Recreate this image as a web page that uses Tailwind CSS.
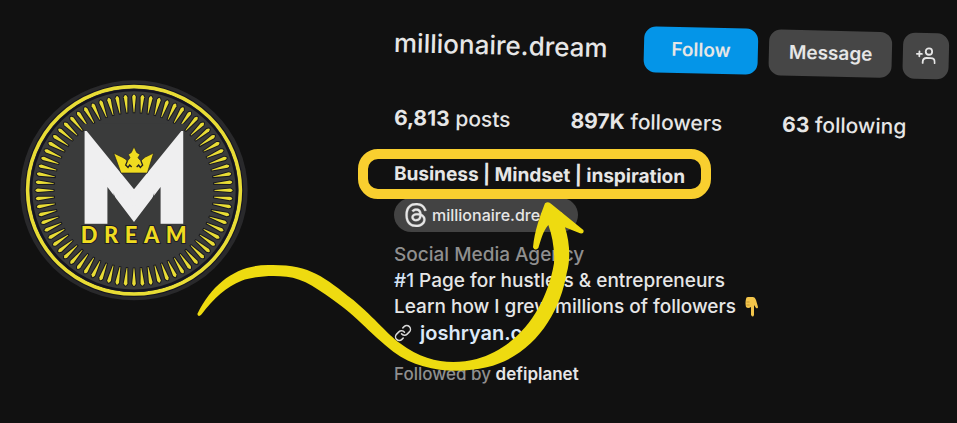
<!DOCTYPE html>
<html lang="en">
<head>
  <meta charset="UTF-8" />
  <meta name="viewport" content="width=device-width, initial-scale=1.0"/>
  <title>millionaire.dream</title>
  <script src="https://cdn.jsdelivr.net/npm/@tailwindcss/browser@4"></script>
</head>
<body class="min-h-screen overflow-x-hidden bg-[#111111] text-[#e6e6e6] font-['Inter',sans-serif]">
  <main class="relative flex items-start pl-5 pr-2 pt-5">
    <!-- Avatar -->
    <svg class="mt-15 w-[228px] shrink-0" viewBox="27 28 686 664" role="img" aria-label="M Dream logo">
      <ellipse cx="370" cy="360" rx="342" ry="331" fill="#29292b"/>
      <ellipse cx="370" cy="360" rx="329" ry="321" fill="#151520"/>
      <ellipse cx="370" cy="360" rx="320" ry="312" fill="#3a3b3b" stroke="#e8dc35" stroke-width="11"/>
      <ellipse cx="370" cy="360" rx="310" ry="302" fill="none" stroke="#151520" stroke-width="8"/>
      <g id="rays"></g>
      <text x="370" y="446" text-anchor="middle" class="font-['Roboto',sans-serif] text-[350px] font-black" fill="#efeff0" stroke="#efeff0" stroke-width="28">M</text>
      <path d="M210 160 L370 357 L530 160Z" fill="#3a3b3b"/>
      <path d="M290 350 L370 455 L450 350 V464 H290Z" fill="#3a3b3b"/>
      <path d="M309 248 L336 261 Q344 264 350 272 L358 262 L353 252 L362 246 L370 229 L378 246 L388 252 L382 262 L391 272 Q397 264 404 260 L429 248 L410 308 L331 308Z" fill="#efdb20" stroke="#202024" stroke-width="2"/>
      <path d="M350 272 L345 284 L352 291 L357 284 L363 290 M391 272 L396 284 L389 291 L384 284 L378 290" fill="none" stroke="#202024" stroke-width="4"/>
      <text x="379" y="519" text-anchor="middle" class="font-['Lato',sans-serif] text-[66px] font-black tracking-[0.3em] [paint-order:stroke]" fill="#efdb20" stroke="#1d1d26" stroke-width="6">DREAM</text>
    </svg>

    <!-- Profile -->
    <section class="ml-[146px] min-w-0 flex-1">
      <div class="flex origin-left rotate-[1.4deg] items-center whitespace-nowrap">
        <h1 class="text-[26px] leading-10 font-medium">millionaire.dream</h1>
        <button class="ml-9 h-[46px] w-[115px] rounded-xl bg-[#0495e8] text-[19px] font-semibold">Follow</button>
        <button class="ml-[11px] h-[46px] w-[123px] rounded-xl bg-[#464646] text-[19px] font-semibold">Message</button>
        <button class="ml-[11px] grid h-[46px] w-[46px] place-items-center rounded-xl bg-[#464646]" aria-label="Add similar account">
          <svg class="h-5 w-5" viewBox="0 0 20 20" fill="none" stroke="currentColor" stroke-width="1.8" stroke-linecap="round">
            <path d="M1 8h5M3.5 5.500v5"/>
            <circle cx="13" cy="5.500" r="3.200"/>
            <path d="M7 17v-1q0-4 4-4h4q4 0 4 4v1"/>
          </svg>
        </button>
      </div>

      <ul class="mt-9 flex origin-left rotate-1 gap-15 whitespace-nowrap text-[21px] leading-8 font-medium">
        <li><b class="font-bold">6,813</b> posts</li>
        <li><b class="font-bold">897K</b> followers</li>
        <li><b class="font-bold">63</b> following</li>
      </ul>

      <div class="relative mt-6 w-fit whitespace-nowrap">
        <p class="origin-left rotate-[0.6deg] text-[19px] leading-8 font-bold">Business | Mindset | inspiration</p>
        <div class="absolute -inset-y-[9px] -right-[26px] -left-9 z-10 rounded-[20px] border-[10px] border-[#f9cf2f]"></div>
      </div>

      <a href="#" class="mt-2 flex h-[34px] w-[184px] items-center gap-1 rounded-full bg-[#434343] pl-[10px] text-base font-medium">
        <svg class="h-6 w-6 shrink-0" viewBox="0 0 16 16" fill="currentColor" stroke="currentColor" stroke-width="0.2">
          <path d="M6.321 6.016c-.27-.18-1.166-.802-1.166-.802.756-1.081 1.753-1.502 3.132-1.502.975 0 1.803.327 2.394.948s.928 1.509 1.005 2.644q.492.207.905.484c1.109.745 1.719 1.860 1.719 3.137 0 2.716-2.226 5.075-6.256 5.075C4.594 16 1 13.987 1 7.994 1 2.034 4.482 0 8.044 0 9.690 0 13.550.243 15 5.036l-1.360.353C12.516 1.974 10.163 1.430 8.006 1.430c-3.565 0-5.582 2.171-5.582 6.790 0 4.143 2.254 6.343 5.630 6.343 2.777 0 4.847-1.443 4.847-3.556 0-1.438-1.208-2.127-1.270-2.127-.236 1.234-.868 3.310-3.644 3.310-1.618 0-3.013-1.118-3.013-2.582 0-2.090 1.984-2.847 3.550-2.847.586 0 1.294.040 1.663.114 0-.637-.540-1.728-1.900-1.728-1.250 0-1.566.405-1.967.868ZM8.716 8.190c-2.040 0-2.304.870-2.304 1.416 0 .878 1.043 1.168 1.600 1.168 1.020 0 2.067-.282 2.232-2.423a6.200 6.200 0 0 0-1.528-.161"/>
        </svg>
        millionaire.dream
      </a>

      <div class="mt-[10px] whitespace-nowrap text-[19px] leading-[26px] font-medium">
        <p class="text-[#8f8f8f]">Social Media Agency</p>
        <p><a href="#" class="text-[#d5e3f5]">#1</a> Page for hustlers &amp; entrepreneurs</p>
        <p class="flex items-center">Learn how I grew millions of followers
          <svg class="ml-2 h-5 w-4" viewBox="0 0 16 20" aria-hidden="true">
            <path d="M2 2Q2 0 4 0h5q2 0 3 3l2 7q0 2-2 1L10 8v10q-1 3-3 0v-8q-3 2-5 0Q1 6 2 2Z" fill="#f3c54b"/>
            <path d="M2.500 5h3M2.500 8h3" stroke="#b98a2c" stroke-width="0.800"/>
          </svg>
        </p>
        <a href="#" class="flex w-fit items-center gap-2 text-xl leading-[26px] font-semibold text-[#dce9f8]">
          <svg class="h-[18px] w-[18px] text-[#d8d8d8]" viewBox="0 0 24 24" fill="none" stroke="currentColor" stroke-width="2" stroke-linecap="round">
            <path d="M10 13a5 5 0 0 0 7.540.540l3-3a5 5 0 0 0-7.070-7.070l-1.720 1.710M14 11a5 5 0 0 0-7.540-.540l-3 3a5 5 0 0 0 7.070 7.070l1.710-1.710"/>
          </svg>
          joshryan.co
        </a>
      </div>
      <p class="mt-4 text-[17px] leading-6 font-medium text-[#8f8f8f]">Followed by <a href="#" class="font-semibold text-[#e6e6e6]">defiplanet</a></p>
    </section>

    <!-- Hand-drawn arrow pointing at the bio line -->
    <svg class="pointer-events-none absolute top-[190px] left-[180px] h-[200px] w-[420px]" viewBox="0 0 1260 600" fill="#eedb10" aria-hidden="true">
      <path d="M52 372C100 275 175 223 270 225C390 223 430 260 520 330C590 390 620 430 660 460C740 520 820 525 890 507C1020 470 1100 350 1122 220C1124 180 1118 140 1105 105C1088 125 1083 150 1075 174Q1064 184 1059 172C1064 120 1080 80 1095 40Q1105 32 1114 42L1210 120Q1214 132 1200 130L1155 112C1170 160 1172 210 1160 250C1140 370 1060 500 920 532C830 552 720 545 640 485C570 430 540 390 480 345C420 300 370 264 320 260C270 255 220 260 185 272C140 290 100 325 65 373Q55 384 52 372Z"/>
    </svg>
  </main>

  <script>
    // 72 tapered rays around the badge
    const rays = document.getElementById('rays');
    for (let i = 0; i < 72; i++) {
      const ray = document.createElementNS('http://www.w3.org/2000/svg', 'path');
      ray.setAttribute('d', 'M-5.500 -290Q0 -304 5.500 -290L1 -242H-1Z');
      ray.setAttribute('transform', `translate(370 360) scale(1 0.97) rotate(${i * 5})`);
      ray.setAttribute('fill', '#e8dc35');
      ray.setAttribute('stroke', '#17171f');
      ray.setAttribute('stroke-width', '6');
      ray.setAttribute('paint-order', 'stroke');
      rays.appendChild(ray);
    }
  </script>
</body>
</html>
